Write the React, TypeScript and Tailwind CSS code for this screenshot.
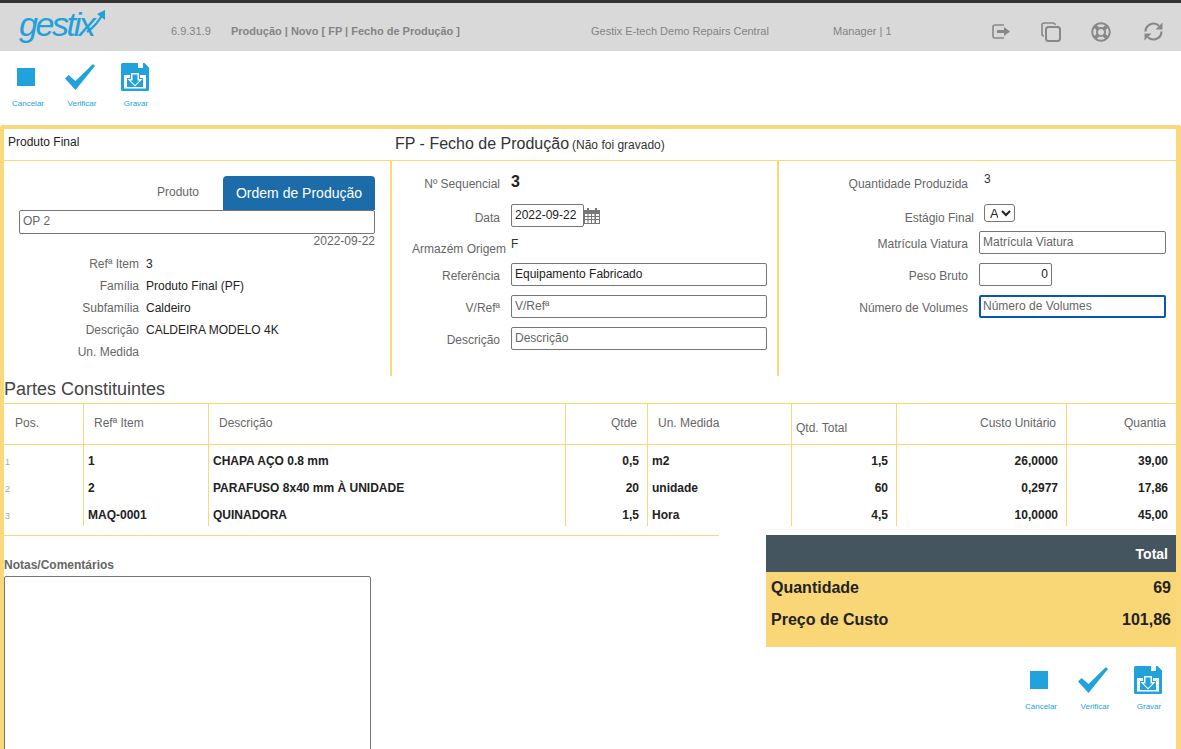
import React from "react";
import { FaRegLifeRing } from "react-icons/fa";

const font = { fontFamily: '"Liberation Sans", Arial, sans-serif' };

function Actions() {
  return (
    <div className="flex">
      <div className="w-[54px] flex flex-col items-center">
        <div className="h-[30px] flex items-center justify-center mr-[4px]">
          <div className="w-[18px] h-[18px] bg-[#20a2dc]" />
        </div>
        <span className="mt-[7px] text-[8px] leading-[10px] text-[#20a2dc]">Cancelar</span>
      </div>
      <div className="w-[54px] flex flex-col items-center">
        <div className="h-[30px] flex items-center justify-center mr-[4px]">
          <svg width="30" height="26" viewBox="0 0 30 26" fill="#20a2dc"><polygon points="0,14.5 3.5,11 10.5,17 28,0 30,2 10.5,26" /></svg>
        </div>
        <span className="mt-[7px] text-[8px] leading-[10px] text-[#20a2dc]">Verificar</span>
      </div>
      <div className="w-[54px] flex flex-col items-center">
        <div className="h-[30px] flex items-center justify-center mr-[2px]">
          <svg width="28" height="28" viewBox="0 0 28 28">
            <path d="M1.5 0H23.5L28 4.5V26.5A1.5 1.5 0 0 1 26.5 28H1.5A1.5 1.5 0 0 1 0 26.5V1.5A1.5 1.5 0 0 1 1.5 0Z" fill="#20a2dc" />
            <rect x="17" y="0" width="5" height="5" fill="#fff" />
            <path d="M3 12H9V15H6V24H22V15H19V12H25V25.5H3Z" fill="#fff" />
            <path d="M10 10H18V16H21.5L14 23.5L6.5 16H10Z" fill="#fff" />
            <path d="M11.5 11.5H16.5V17.5H18.5L14 22L9.5 17.5H11.5Z" fill="#20a2dc" />
          </svg>
        </div>
        <span className="mt-[7px] text-[8px] leading-[10px] text-[#20a2dc]">Gravar</span>
      </div>
    </div>
  );
}

function Info({ label, value }: { label: string; value?: string }) {
  return (
    <div className="flex h-[22px] items-center">
      <span className="w-[135px] text-right text-[#666]">{label}</span>
      <span className="ml-[7px] text-[#222]">{value}</span>
    </div>
  );
}

function FieldInput({ value, placeholder, width, focused, right }: { value?: string; placeholder?: string; width: string; focused?: boolean; right?: boolean }) {
  return (
    <input
      readOnly
      value={value}
      placeholder={placeholder}
      className={
        width +
        " h-[23px] rounded-[2px] px-[3px] pb-[2px] text-[12px] text-[#222] placeholder:text-[#666] bg-white " +
        (focused ? "border-2 border-[#0a56b8] pl-[2px] " : "border border-[#767676] ") +
        (right ? "text-right" : "")
      }
    />
  );
}

function Calendar() {
  return (
    <svg width="16" height="16" viewBox="0 0 16 16" fill="#777">
      <rect x="0" y="2" width="16" height="14" />
      <rect x="3" y="0" width="2" height="3" />
      <rect x="11" y="0" width="2" height="3" />
      <g fill="#fff">
        <rect x="1" y="6" width="2.5" height="2" /><rect x="4.5" y="6" width="2.5" height="2" /><rect x="8" y="6" width="2.5" height="2" /><rect x="12" y="6" width="3" height="2" />
        <rect x="1" y="9" width="2.5" height="2" /><rect x="4.5" y="9" width="2.5" height="2" /><rect x="8" y="9" width="2.5" height="2" /><rect x="12" y="9" width="3" height="2" />
        <rect x="1" y="12" width="2.5" height="3" /><rect x="4.5" y="12" width="2.5" height="3" /><rect x="8" y="12" width="2.5" height="3" /><rect x="12" y="12" width="3" height="3" />
      </g>
    </svg>
  );
}

function Refresh() {
  return (
    <svg className="ml-[32px]" width="21" height="21" viewBox="0 0 21 21" fill="none">
      <path d="M2.5 10.5A8 8 0 0 1 16 4.8" stroke="#888" strokeWidth="2.2" />
      <path d="M18.5 10.5A8 8 0 0 1 5 16.2" stroke="#888" strokeWidth="2.2" />
      <polygon points="19.5,1.5 19.5,8.5 12.5,8.5" fill="#888" />
      <polygon points="1.5,19.5 1.5,12.5 8.5,12.5" fill="#888" />
    </svg>
  );
}

const rows = [
  ["1", "1", "CHAPA AÇO 0.8 mm", "0,5", "m2", "1,5", "26,0000", "39,00"],
  ["2", "2", "PARAFUSO 8x40 mm À UNIDADE", "20", "unidade", "60", "0,2977", "17,86"],
  ["3", "MAQ-0001", "QUINADORA", "1,5", "Hora", "4,5", "10,0000", "45,00"],
];

const gridCols = "grid grid-cols-[80px_125px_357px_82px_144px_105px_170px_109px]";
const headCell = "border-r border-[#fbd97b] text-[#666] h-[40px]";
const bodyCell = "border-r border-[#fbd97b] pt-[5px] flex items-center font-bold text-[#222]";

export default function App() {
  return (
    <div style={font} className="h-[749px] w-[1181px] overflow-hidden bg-white flex flex-col text-[12px]">
      {/* top bar */}
      <div className="h-[51px] shrink-0 border-t-[3px] border-[#333] bg-[#d9d9d9] flex items-center text-[11px] text-[#848484]">
        <div className="relative w-[171px] h-full pl-[19px]">
          <span className="block mt-[2px] italic text-[34px] leading-[38px] tracking-[-2.4px] text-[#22a0dc]">gestix</span>
          <svg className="absolute left-[84px] top-[6px]" width="24" height="26" viewBox="0 0 24 26" fill="none">
            <path d="M3 23C10 18 15 12 18 6" stroke="#22a0dc" strokeWidth="2.2" />
            <polygon points="21,1 21,11 13,5" fill="#22a0dc" />
          </svg>
        </div>
        <span className="w-[60px] mt-[9px]">6.9.31.9</span>
        <span className="w-[360px] mt-[9px] font-bold">Produção | Novo [ FP | Fecho de Produção ]</span>
        <span className="w-[242px] mt-[9px]">Gestix E-tech Demo Repairs Central</span>
        <span className="w-[159px] mt-[9px]">Manager | 1</span>
        <div className="flex items-center mt-[9px] text-[#888]">
          <svg className="w-[19px]" width="19" height="16" viewBox="0 0 19 16" fill="none">
            <path d="M12 1H3A2 2 0 0 0 1 3V12A2 2 0 0 0 3 14H12" stroke="#888" strokeWidth="1.6" />
            <path d="M5 6H12V3L18 7.5L12 12V9H5Z" fill="#888" />
          </svg>
          <svg className="ml-[30px]" width="20" height="20" viewBox="0 0 20 20" fill="none" stroke="#888" strokeWidth="1.6">
            <path d="M3 14A2 2 0 0 1 1 12V3A2 2 0 0 1 3 1H12A2 2 0 0 1 14 3" />
            <rect x="5" y="5" width="14" height="14" rx="2.5" strokeWidth="2" />
          </svg>
          <FaRegLifeRing className="ml-[30px]" size={20} color="#888" />
          <Refresh />
        </div>
      </div>

      {/* toolbar */}
      <div className="h-[74px] shrink-0 pl-px pt-[11px]">
        <Actions />
      </div>

      {/* panel */}
      <div className="flex-1 min-h-0 border-t-[4px] border-l-[4px] border-r-[5px] border-[#fbd97b] rounded-t-[3px] flex flex-col">
        <div className="h-[32px] shrink-0 border-b border-[#fbd97b] flex">
          <span className="w-[391px] pl-[4px] pt-[4px] text-[#222]">Produto Final</span>
          <div className="pt-[5px] text-[#333]">
            <span className="text-[16px] leading-[20px]">FP - Fecho de Produção</span>
            <span className="ml-[3px]">(Não foi gravado)</span>
          </div>
        </div>

        <div className="h-[215px] shrink-0 flex">
          {/* col 1 */}
          <div className="w-[388px] border-r-2 border-[#fbd97b] pt-[15px]">
            <div className="flex items-center h-[34px]">
              <span className="w-[195px] text-right text-[#666] mb-[3px]">Produto</span>
              <button className="ml-[24px] w-[152px] h-[34px] rounded-t-[4px] bg-[#1b6ca8] text-white text-[14px]">Ordem de Produção</button>
            </div>
            <div className="pl-[15px]">
              <FieldInput value="OP 2" width="w-[356px] h-[24px] !text-[#666]" />
              <div className="w-[356px] text-right text-[#666] leading-[14px]">2022-09-22</div>
            </div>
            <div className="mt-[5px]">
              <Info label="Refª Item" value="3" />
              <Info label="Família" value="Produto Final (PF)" />
              <Info label="Subfamília" value="Caldeiro" />
              <Info label="Descrição" value="CALDEIRA MODELO 4K" />
              <Info label="Un. Medida" />
            </div>
          </div>

          {/* col 2 */}
          <div className="w-[387px] border-r-2 border-[#fbd97b] pt-[11px]">
            <div className="flex h-[32px]">
              <span className="w-[108px] text-right text-[#666] mt-[3px]">Nº Sequencial</span>
              <span className="ml-[11px] mt-px font-bold text-[16px] leading-[18px] text-[#222]">3</span>
            </div>
            <div className="flex h-[32px] items-start">
              <span className="w-[108px] text-right text-[#666] mt-[5px]">Data</span>
              <FieldInput value="2022-09-22" width="ml-[11px] w-[73px]" />
              <span className="mt-[4px]"><Calendar /></span>
            </div>
            <div className="flex h-[27px]">
              <span className="w-[114px] text-right text-[#666] mt-[4px]">Armazém Origem</span>
              <span className="ml-[5px] text-[#333] -mt-px">F</span>
            </div>
            <div className="flex flex-col gap-[9px]">
              <div className="flex">
                <span className="w-[108px] text-right text-[#666] mt-[4px]">Referência</span>
                <FieldInput value="Equipamento Fabricado" width="ml-[11px] w-[256px]" />
              </div>
              <div className="flex">
                <span className="w-[108px] text-right text-[#666] mt-[4px]">V/Refª</span>
                <FieldInput placeholder="V/Refª" width="ml-[11px] w-[256px]" />
              </div>
              <div className="flex">
                <span className="w-[108px] text-right text-[#666] mt-[4px]">Descrição</span>
                <FieldInput placeholder="Descrição" width="ml-[11px] w-[256px]" />
              </div>
            </div>
          </div>

          {/* col 3 */}
          <div className="flex-1 pt-[11px]">
            <div className="flex h-[32px]">
              <span className="w-[189px] text-right text-[#666] mt-[3px]">Quantidade Produzida</span>
              <span className="ml-[16px] text-[#333] -mt-[2px]">3</span>
            </div>
            <div className="flex h-[27px] items-start">
              <span className="w-[195px] text-right text-[#666] mt-[5px]">Estágio Final</span>
              <select className="ml-[10px] w-[31px] h-[18px] border border-[#767676] rounded-[3px] text-[13px] text-[#222] pl-px">
                <option>A</option>
              </select>
            </div>
            <div className="flex flex-col gap-[9px]">
              <div className="flex">
                <span className="w-[189px] text-right text-[#666] mt-[4px]">Matrícula Viatura</span>
                <FieldInput placeholder="Matrícula Viatura" width="ml-[11px] w-[187px]" />
              </div>
              <div className="flex">
                <span className="w-[189px] text-right text-[#666] mt-[4px]">Peso Bruto</span>
                <FieldInput value="0" right width="ml-[11px] w-[73px]" />
              </div>
              <div className="flex">
                <span className="w-[189px] text-right text-[#666] mt-[4px]">Número de Volumes</span>
                <FieldInput placeholder="Número de Volumes" focused width="ml-[11px] w-[187px]" />
              </div>
            </div>
          </div>
        </div>

        {/* table */}
        <div className="h-[27px] shrink-0 pt-px text-[18px] leading-[24px] text-[#444]">Partes Constituintes</div>
        <div className="shrink-0 border-t border-[#fbd97b]">
          <div className={gridCols + " border-b border-[#fbd97b]"}>
            <div className={headCell + " pl-[11px] pt-[10px]"}>Pos.</div>
            <div className={headCell + " pl-[10px] pt-[10px]"}>Refª Item</div>
            <div className={headCell + " pl-[10px] pt-[10px]"}>Descrição</div>
            <div className={headCell + " pr-[10px] pt-[10px] text-right"}>Qtde</div>
            <div className={headCell + " pl-[10px] pt-[10px]"}>Un. Medida</div>
            <div className={headCell + " pl-[4px] pt-[15px]"}>Qtd. Total</div>
            <div className={headCell + " pr-[10px] pt-[10px] text-right"}>Custo Unitário</div>
            <div className="h-[40px] pr-[10px] pt-[10px] text-right text-[#666]">Quantia</div>
          </div>
          <div>
            {rows.map((r) => (
              <div key={r[0]} className={gridCols + (r[0] === "3" ? " h-[28px] pb-px" : " h-[27px]")}>
                <div className={bodyCell + " !font-normal !text-[#aaa] text-[9px] pl-px !pt-[8px]"}>{r[0]}</div>
                <div className={bodyCell + " pl-[4px]"}>{r[1]}</div>
                <div className={bodyCell + " pl-[4px]"}>{r[2]}</div>
                <div className={bodyCell + " justify-end pr-[8px]"}>{r[3]}</div>
                <div className={bodyCell + " pl-[4px]"}>{r[4]}</div>
                <div className={bodyCell + " justify-end pr-[8px]"}>{r[5]}</div>
                <div className={bodyCell + " justify-end pr-[8px]"}>{r[6]}</div>
                <div className="pt-[5px] flex items-center justify-end pr-[8px] font-bold text-[#222]">{r[7]}</div>
              </div>
            ))}
          </div>
        </div>

        {/* bottom */}
        <div className="flex mt-[8px]">
          <div className="w-[762px] shrink-0">
            <div className="w-[715px] border-t border-[#fbd97b]" />
            <div className="mt-[22px] font-bold text-[#666] leading-[14px]">Notas/Comentários</div>
            <textarea readOnly className="block mt-[4px] w-[367px] h-[300px] border border-[#767676] rounded-[2px] bg-white" />
          </div>
          <div className="flex-1">
            <div className="h-[37px] bg-[#455560] flex items-center justify-end pr-[8px] pt-px text-white font-bold text-[14px]">Total</div>
            <div className="h-[75px] bg-[#fad776] px-[5px] font-bold text-[16px] text-[#222]">
              <div className="h-[32px] flex justify-between items-center"><span>Quantidade</span><span>69</span></div>
              <div className="h-[32px] flex justify-between items-center"><span>Preço de Custo</span><span>101,86</span></div>
            </div>
            <div className="flex justify-end pt-[18px]">
              <Actions />
            </div>
          </div>
        </div>
      </div>
    </div>
  );
}
